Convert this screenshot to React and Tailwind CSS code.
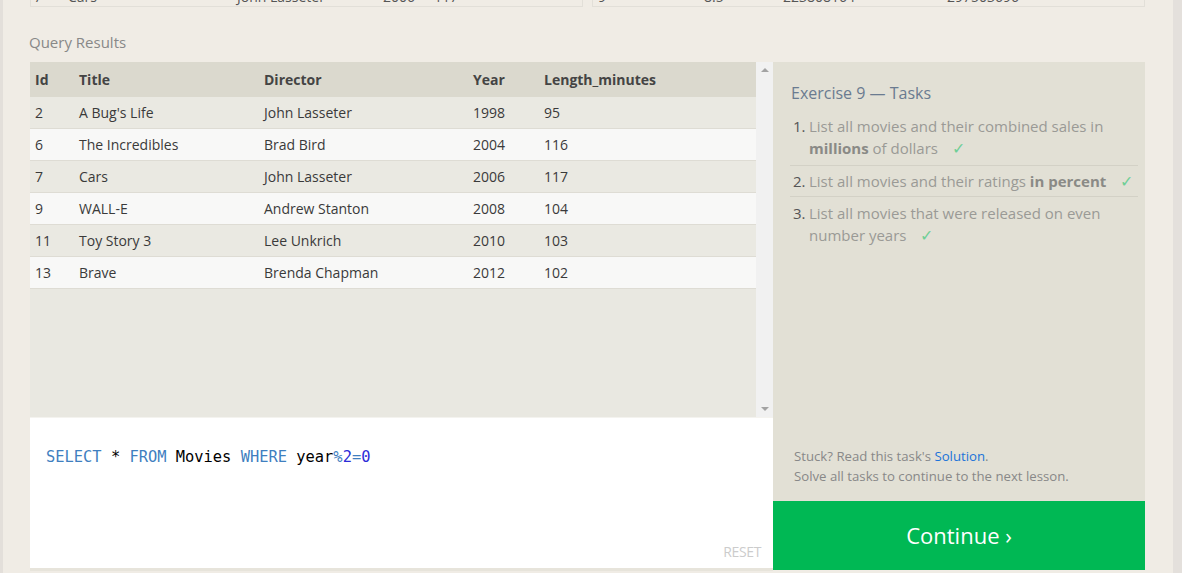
import React from 'react';

const rows = [
  { id: 2, title: "A Bug's Life", director: 'John Lasseter', year: 1998, length: 95 },
  { id: 6, title: 'The Incredibles', director: 'Brad Bird', year: 2004, length: 116 },
  { id: 7, title: 'Cars', director: 'John Lasseter', year: 2006, length: 117 },
  { id: 9, title: 'WALL-E', director: 'Andrew Stanton', year: 2008, length: 104 },
  { id: 11, title: 'Toy Story 3', director: 'Lee Unkrich', year: 2010, length: 103 },
  { id: 13, title: 'Brave', director: 'Brenda Chapman', year: 2012, length: 102 },
];

const cols = 'grid grid-cols-[44px_185px_209px_71px_1fr]';

function Check() {
  return <span className="ml-[14px] text-[16px] text-[#6fcf97]">✓</span>;
}

export default function App() {
  return (
    <div
      className="h-[573px] w-full overflow-hidden bg-[#f0ece5] border-l-[3px] border-l-[#e3dfda] border-r-[9px] border-r-[#e4e0dc] text-[#333]"
      style={{ fontFamily: '"Open Sans", "Noto Sans", sans-serif' }}
    >
      {/* bottom edge of the previous exercise's tables */}
      <div className="ml-[27px] flex h-[7px] gap-[9px]">
        <div className="w-[553px] overflow-hidden border-x border-b border-[#e2dfd8] text-[14px] leading-5">
          <div className="-mt-[13px] flex text-[#555]">
            <span className="ml-[3px] w-[34px]">7</span>
            <span className="w-[169px]">Cars</span>
            <span className="w-[146px]">John Lasseter</span>
            <span className="w-[51px]">2006</span>
            <span>117</span>
          </div>
        </div>
        <div className="w-[553px] overflow-hidden border-x border-b border-[#e2dfd8] text-[14px] leading-5">
          <div className="-mt-[13px] flex text-[#555]">
            <span className="ml-[5px] w-[106px]">9</span>
            <span className="w-[79px]">8.5</span>
            <span className="w-[164px]">223808164</span>
            <span>297503696</span>
          </div>
        </div>
      </div>

      <h3 className="ml-[26px] mt-[25px] text-[15px] leading-5 text-[#888]">Query Results</h3>

      <div className="ml-[27px] mt-[10px] flex w-[1115px]">
        {/* left: results + editor */}
        <div className="flex w-[743px] flex-col">
          <div className="flex h-[355px] bg-[#e9e8e1]">
            <div className="flex-1 text-[14px]">
              <div className={`${cols} h-[35px] items-center bg-[#dbd9ce] font-bold text-[#444]`}>
                <div className="pl-[5px]">Id</div>
                <div className="pl-[5px]">Title</div>
                <div className="pl-[5px]">Director</div>
                <div className="pl-[5px]">Year</div>
                <div className="pl-[5px]">Length_minutes</div>
              </div>
              {rows.map((r, i) => (
                <div
                  key={r.id}
                  className={`${cols} h-[32px] items-center border-b border-[#dedcd4] text-[#3a3a3a] ${
                    i % 2 === 0 ? 'bg-[#eae9e2]' : 'bg-[#f8f8f7]'
                  }`}
                >
                  <div className="pl-[5px]">{r.id}</div>
                  <div className="pl-[5px]">{r.title}</div>
                  <div className="pl-[5px]">{r.director}</div>
                  <div className="pl-[5px]">{r.year}</div>
                  <div className="pl-[5px]">{r.length}</div>
                </div>
              ))}
            </div>
            {/* scrollbar */}
            <div className="flex w-[17px] flex-col justify-between bg-[#f1f1f1] py-[6px]">
              <div className="mx-auto h-0 w-0 border-x-[4px] border-b-[4px] border-x-transparent border-b-[#a3a3a3]" />
              <div className="mx-auto h-0 w-0 border-x-[4px] border-t-[4px] border-x-transparent border-t-[#a3a3a3]" />
            </div>
          </div>
          <div className="flex h-[151px] flex-col border-t border-[#f4f3ef] bg-white">
            <pre
              className="ml-[16px] mt-[27px] text-[15.4px] leading-6 text-black"
              style={{ fontFamily: '"DejaVu Sans Mono", "Liberation Mono", monospace' }}
            >
              <span className="text-[#3f7fbf]">SELECT</span> * <span className="text-[#3f7fbf]">FROM</span> Movies{' '}
              <span className="text-[#3f7fbf]">WHERE</span> year<span className="text-[#3f7fbf]">%</span>
              <span className="text-[#2c2cd8]">2</span>
              <span className="text-[#3f7fbf]">=</span>
              <span className="text-[#2c2cd8]">0</span>
            </pre>
            <div className="mt-auto mb-[6px] mr-[12px] self-end text-[14px] uppercase tracking-tight text-[#ccc]">
              Reset
            </div>
          </div>
          <div className="h-[3px] bg-[#e7e4db]" />
        </div>

        {/* right: tasks */}
        <div className="flex w-[372px] flex-col">
          <div className="flex h-[439px] flex-col bg-[#e2e0d5] pl-[17px] pr-[7px]">
            <h4 className="mt-[19px] pl-[1px] text-[16px] leading-6 text-[#6a7b90]">Exercise 9 — Tasks</h4>
            <ol className="mt-[10px] text-[15px] leading-[22px] text-[#9a9a96]">
              <li className="flex border-b border-[#d3d1c6] pb-[6px]">
                <span className="w-[19px] shrink-0 pl-[3px] text-[#555]">1.</span>
                <span>
                  List all movies and their combined sales in <b className="text-[#8a8a86]">millions</b> of dollars
                  <Check />
                </span>
              </li>
              <li className="flex border-b border-[#d3d1c6] py-[4px]">
                <span className="w-[19px] shrink-0 pl-[3px] text-[#555]">2.</span>
                <span>
                  List all movies and their ratings <b className="text-[#8a8a86]">in percent</b>
                  <Check />
                </span>
              </li>
              <li className="flex pt-[5px]">
                <span className="w-[19px] shrink-0 pl-[3px] text-[#555]">3.</span>
                <span>
                  List all movies that were released on even number years
                  <Check />
                </span>
              </li>
            </ol>
            <div className="mt-auto mb-[15px] pl-[4px] text-[13.2px] leading-5 text-[#888]">
              <p>
                Stuck? Read this task's <span className="text-[#1a73d9]">Solution</span>.
              </p>
              <p>Solve all tasks to continue to the next lesson.</p>
            </div>
          </div>
          <div className="flex h-[69px] items-center justify-center bg-[#00b854] text-[22px] text-white">
            Continue ›
          </div>
        </div>
      </div>
    </div>
  );
}
